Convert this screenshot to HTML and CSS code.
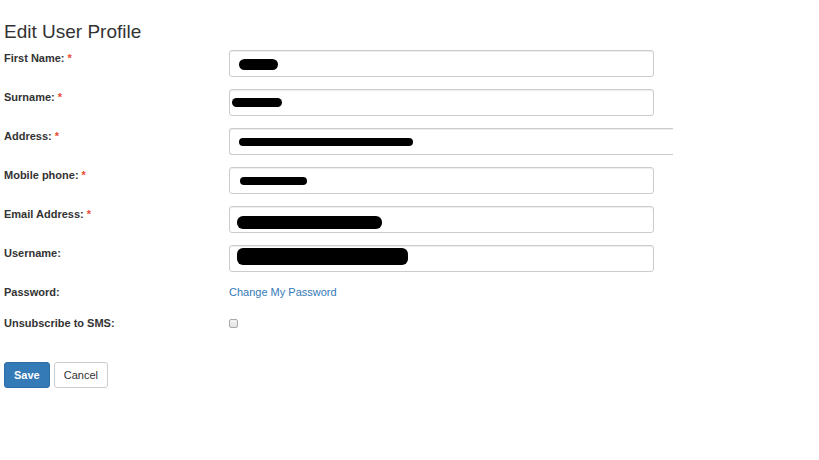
FILE: index.html
```html
<!DOCTYPE html>
<html lang="en">
<head>
    <meta charset="UTF-8">
    <meta name="viewport" content="width=device-width, initial-scale=1.0">
    <title>Edit User Profile</title>
    <link rel="stylesheet" href="styles.css">
</head>
<body>
    <div class="pagina">
        <h3 class="titulo">Edit User Profile</h3>
        <form class="formulario">
            <label class="etiqueta">First Name: <span class="requerido">*</span></label>
            <div class="campo">
                <input type="text" class="entrada">
                <span class="tachado" style="left: 10px; top: 9px; width: 39px; height: 11px;"></span>
            </div>

            <label class="etiqueta">Surname: <span class="requerido">*</span></label>
            <div class="campo">
                <input type="text" class="entrada">
                <span class="tachado" style="left: 3px; top: 9px; width: 50px; height: 9px;"></span>
            </div>

            <label class="etiqueta">Address: <span class="requerido">*</span></label>
            <div class="campo">
                <input type="text" class="entrada entrada-ancha">
                <span class="tachado" style="left: 10px; top: 10px; width: 174px; height: 8px;"></span>
            </div>

            <label class="etiqueta">Mobile phone: <span class="requerido">*</span></label>
            <div class="campo">
                <input type="text" class="entrada">
                <span class="tachado" style="left: 11px; top: 10px; width: 67px; height: 8px;"></span>
            </div>

            <label class="etiqueta">Email Address: <span class="requerido">*</span></label>
            <div class="campo">
                <input type="text" class="entrada">
                <span class="tachado" style="left: 8px; top: 10px; width: 145px; height: 13px;"></span>
            </div>

            <label class="etiqueta">Username:</label>
            <div class="campo">
                <input type="text" class="entrada">
                <span class="tachado" style="left: 8px; top: 3px; width: 171px; height: 17px;"></span>
            </div>

            <label class="etiqueta fila-clave">Password:</label>
            <div class="fila-clave">
                <a href="#" class="enlace">Change My Password</a>
            </div>

            <label class="etiqueta">Unsubscribe to SMS:</label>
            <div class="fila-check">
                <input type="checkbox" class="casilla">
            </div>
        </form>

        <div class="botones">
            <button class="boton boton-guardar">Save</button>
            <button class="boton boton-cancelar">Cancel</button>
        </div>
    </div>
</body>
</html>
```

FILE: styles.css
```css
body {
    margin: 0;
    background-color: #ffffff;
    font-family: 'Liberation Sans', Arial, sans-serif;
    font-size: 11px;
    color: #333;
}
.pagina {
    padding: 0 4px;
}
.titulo {
    margin: 21px 0 8px 0;
    font-size: 19px;
    font-weight: normal;
    line-height: 21px;
    color: #333;
}
.formulario {
    display: grid;
    grid-template-columns: 225px 1fr;
    row-gap: 12px;
    align-items: start;
}
.etiqueta {
    font-weight: bold;
    line-height: 16px;
}
.requerido {
    color: #ec4a33;
}
.campo {
    position: relative;
    height: 27px;
}
.entrada {
    box-sizing: border-box;
    width: 425px;
    height: 27px;
    margin: 0;
    padding: 4px 8px;
    border: 1px solid #ccc;
    border-radius: 3px;
    box-shadow: inset 0 1px 1px rgba(0, 0, 0, 0.075);
    font-family: inherit;
    font-size: 11px;
    color: #555;
}
.entrada-ancha {
    width: 444px;
    border-right: none;
    border-radius: 3px 0 0 3px;
}
.tachado {
    position: absolute;
    background-color: #000;
    border-radius: 6px;
}
.fila-clave {
    line-height: 16px;
    padding-bottom: 3px;
}
.enlace {
    color: #337ab7;
    text-decoration: none;
}
.fila-check {
    height: 16px;
    display: flex;
    align-items: center;
}
.casilla {
    appearance: none;
    -webkit-appearance: none;
    width: 9px;
    height: 9px;
    margin: 0;
    border: 1px solid #aaa;
    border-radius: 2px;
    background: linear-gradient(#f4f4f4, #e2e2e2);
}
.botones {
    display: flex;
    gap: 4px;
    margin-top: 31px;
}
.boton {
    height: 26px;
    padding: 0 9px;
    border-radius: 3px;
    font-family: inherit;
    font-size: 11px;
    cursor: pointer;
}
.boton-guardar {
    background-color: #337ab7;
    border: 1px solid #2e6da4;
    color: #fff;
    font-weight: bold;
}
.boton-cancelar {
    background-color: #fff;
    border: 1px solid #ccc;
    color: #333;
}
```
